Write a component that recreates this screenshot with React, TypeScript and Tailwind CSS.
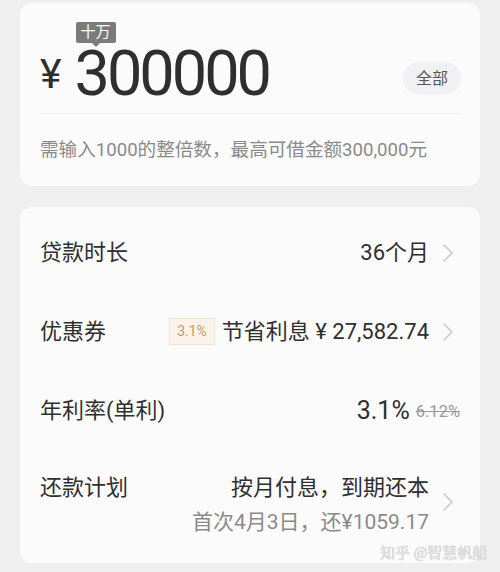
import React from "react";

const Chevron = ({ className = "" }: { className?: string }) => (
  <svg width="12" height="20" viewBox="0 0 12 20" className={className} fill="none">
    <polyline points="2,2 10,10 2,18" stroke="#c9c9c9" strokeWidth="1.6" strokeLinejoin="round" strokeLinecap="round" />
  </svg>
);

export default function App() {
  const font = { fontFamily: 'Roboto, "Noto Sans CJK SC", sans-serif' };
  return (
    <div className="w-[500px] h-[572px] bg-[#efefef] px-[20px] pt-[3px] overflow-hidden relative" style={font}>
      {/* Card 1 */}
      <div className="h-[183px] bg-[#fbfbfb] rounded-[12px] px-[20px] flex flex-col">
        <div className="h-[110px] flex items-end pb-[13px] relative">
          <div className="flex items-end">
            <span className="text-[41px] leading-[41px] text-[#2e2e2e] mb-[5px]">¥</span>
            <div className="relative ml-[13px]">
              <div className="absolute left-[1px] top-[-26px] flex flex-col items-center">
                <div className="bg-[#7b7b7b] text-white text-[15px] leading-[21px] px-[5px] rounded-[2px]">十万</div>
                <div className="w-0 h-0 border-l-[4px] border-r-[4px] border-t-[4px] border-l-transparent border-r-transparent border-t-[#7b7b7b]" />
              </div>
              <span className="text-[63px] leading-[52px] text-[#2f2f2f] tracking-[-3px] block">300000</span>
            </div>
          </div>
          <div className="ml-auto mb-[5px] mr-[-1px] h-[33px] w-[58px] rounded-full bg-[#f1f1f4] flex items-center justify-center text-[16px] text-[#555]">
            全部
          </div>
        </div>
        <div className="h-px bg-[#ececec]" />
        <div className="pt-[23px] text-[18.6px] leading-[26px] text-[#8a8a8a] whitespace-nowrap">需输入1000的整倍数，最高可借金额300,000元</div>
      </div>

      {/* Card 2 */}
      <div className="mt-[21px] h-[356px] bg-[#fbfbfb] rounded-[12px] pl-[20px] pr-[26px] pt-[6px] flex flex-col text-[#2f2f2f]">
        <div className="h-[79px] flex items-center">
          <span className="text-[22px]">贷款时长</span>
          <span className="ml-auto text-[22px]">36个月</span>
          <Chevron className="ml-[13px]" />
        </div>
        <div className="h-[79px] flex items-center">
          <span className="text-[22px]">优惠券</span>
          <span className="ml-auto h-[27px] px-[7px] flex items-center bg-[#fbf3ea] border border-[#efe3d6] text-[#c49a6c] text-[14px]">3.1%</span>
          <span className="ml-[7px] text-[22px] whitespace-nowrap">节省利息 ¥ 27,582.74</span>
          <Chevron className="ml-[13px]" />
        </div>
        <div className="h-[79px] flex items-center">
          <span className="text-[22px]">年利率(单利)</span>
          <span className="ml-auto text-[25px]">3.1%</span>
          <span className="ml-[6px] mr-[-6px] text-[16.5px] text-[#9a9a9a] line-through mt-[3px]">6.12%</span>
        </div>
        <div className="flex pt-[22px]">
          <span className="text-[22px] leading-[32px]">还款计划</span>
          <div className="ml-auto flex flex-col items-end">
            <span className="text-[22px] leading-[32px]">按月付息，到期还本</span>
            <span className="text-[21px] leading-[30px] text-[#8a8a8a] mt-[3px] whitespace-nowrap">首次4月3日，还¥1059.17</span>
          </div>
          <Chevron className="ml-[13px] mt-[20px]" />
        </div>
      </div>

      <div className="absolute left-[380px] top-[543px] text-[15px] leading-[20px] text-[#dcdcdc] whitespace-nowrap" style={{ textShadow: "0 0 1px #c4c4c4" }}>
        知乎 @智慧帆船
      </div>
    </div>
  );
}
